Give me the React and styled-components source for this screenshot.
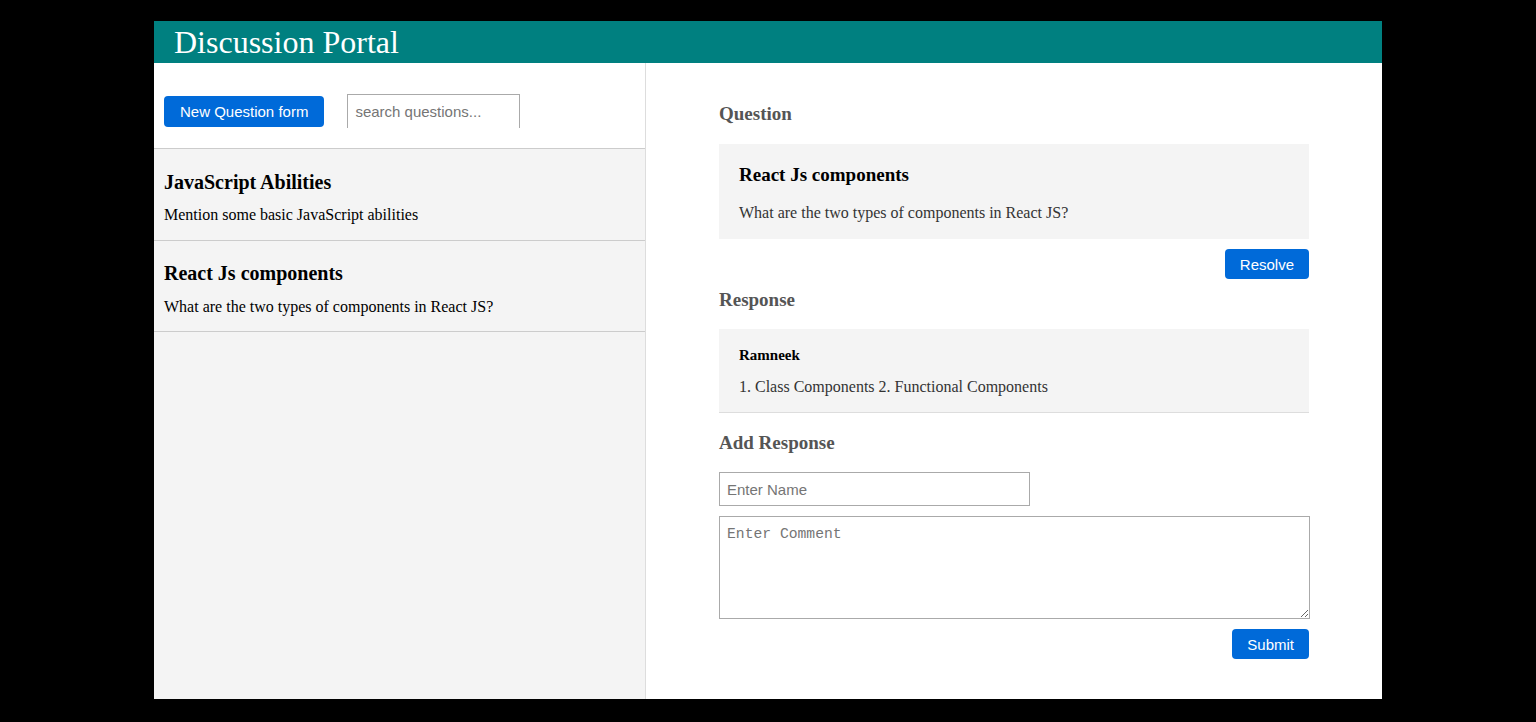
import React from "react";
import styled, { createGlobalStyle } from "styled-components";

const Global = createGlobalStyle`
  html, body { margin: 0; padding: 0; background: #000; }
  body { font-family: "Liberation Serif", "Times New Roman", serif; }
  * { box-sizing: border-box; }
`;

const Page = styled.div`
  width: 1228px;
  height: 678px;
  margin: 21px auto 0;
  background: #fff;
  display: flex;
  flex-direction: column;
`;

const Header = styled.header`
  height: 42px;
  background: #008080;
  color: #fff;
  padding-left: 20px;
  display: flex;
  align-items: center;
  font-size: 32px;
  line-height: 42px;
  font-family: "Liberation Serif", serif;
`;

const Main = styled.div`
  flex: 1;
  display: flex;
  min-height: 0;
`;

const Sidebar = styled.aside`
  width: 492px;
  border-right: 1px solid #ddd;
  display: flex;
  flex-direction: column;
`;

const Toolbar = styled.div`
  height: 85px;
  padding: 31px 10px 0;
  display: flex;
  align-items: flex-start;
  gap: 23px;
`;

const Button = styled.button`
  height: ${(p) => p.$h || 30}px;
  padding: 0 ${(p) => p.$px || 16}px;
  margin-top: ${(p) => p.$mt || 0}px;
  background: #006ad9;
  color: #fff;
  border: none;
  border-radius: 4px;
  font-family: "Liberation Sans", Arial, sans-serif;
  font-size: 15px;
  cursor: pointer;
`;

const Search = styled.input`
  width: 173px;
  height: 34px;
  border: 1px solid #aaa;
  border-bottom: none;
  padding: 0 7px;
  font-family: "Liberation Sans", Arial, sans-serif;
  font-size: 15px;
  outline: none;
  &::placeholder { color: #757575; }
`;

const List = styled.div`
  flex: 1;
  background: #f4f4f4;
  border-top: 1px solid #ccc;
`;

const Item = styled.div`
  padding: 21px 10px 15px;
  border-bottom: 1px solid #ccc;
  &:first-child { padding-top: 22px; padding-bottom: 16px; }
`;

const ItemTitle = styled.h3`
  margin: 0 0 ${(p) => (p.$first ? 12 : 13)}px;
  font-size: 20px;
  line-height: 22px;
  font-weight: bold;
  color: #000;
`;

const ItemText = styled.p`
  margin: 0;
  font-size: 16px;
  line-height: 19px;
  color: #000;
`;

const Detail = styled.section`
  flex: 1;
  display: flex;
  justify-content: center;
`;

const DetailInner = styled.div`
  width: 590px;
  padding-top: 40px;
  display: flex;
  flex-direction: column;
`;

const SectionTitle = styled.h3`
  margin: ${(p) => p.$mt || 0}px 0 ${(p) => p.$mb || 18}px;
  font-size: 19px;
  line-height: 22px;
  font-weight: bold;
  color: #555;
`;

const Card = styled.div`
  background: #f4f4f4;
  padding: ${(p) => p.$pad};
  border-bottom: ${(p) => (p.$border ? "1px solid #ddd" : "none")};
`;

const CardTitle = styled.h4`
  margin: 0 0 ${(p) => p.$mb}px;
  font-size: ${(p) => p.$size}px;
  line-height: ${(p) => p.$lh}px;
  font-weight: bold;
  color: #000;
`;

const CardText = styled.p`
  margin: 0;
  font-size: 16px;
  line-height: 18px;
  color: #333;
`;

const Actions = styled.div`
  display: flex;
  justify-content: flex-end;
  margin-top: ${(p) => p.$mt}px;
`;

const NameInput = styled.input`
  width: 311px;
  height: 34px;
  border: 1px solid #aaa;
  padding: 0 7px;
  font-family: "Liberation Sans", Arial, sans-serif;
  font-size: 15px;
  outline: none;
  &::placeholder { color: #757575; }
`;

const Comment = styled.textarea`
  width: 591px;
  height: 103px;
  margin-top: 10px;
  border: 1px solid #aaa;
  padding: 9px 7px;
  font-family: "Liberation Mono", "Courier New", monospace;
  font-size: 14.7px;
  outline: none;
  resize: vertical;
  &::placeholder { color: #757575; }
`;

const questions = [
  { title: "JavaScript Abilities", text: "Mention some basic JavaScript abilities" },
  { title: "React Js components", text: "What are the two types of components in React JS?" },
];

export default function App() {
  return (
    <>
      <Global />
      <Page>
        <Header>Discussion Portal</Header>
        <Main>
          <Sidebar>
            <Toolbar>
              <Button $h={31} $px={16} $mt={2}>New Question form</Button>
              <Search placeholder="search questions..." />
            </Toolbar>
            <List>
              {questions.map((q, i) => (
                <Item key={q.title}>
                  <ItemTitle $first={i === 0}>{q.title}</ItemTitle>
                  <ItemText>{q.text}</ItemText>
                </Item>
              ))}
            </List>
          </Sidebar>
          <Detail>
            <DetailInner>
              <SectionTitle $mb={19}>Question</SectionTitle>
              <Card $pad="20px 20px 17px">
                <CardTitle $size={19} $lh={22} $mb={18}>React Js components</CardTitle>
                <CardText>What are the two types of components in React JS?</CardText>
              </Card>
              <Actions $mt={10}>
                <Button $h={30} $px={15}>Resolve</Button>
              </Actions>
              <SectionTitle $mt={10} $mb={18}>Response</SectionTitle>
              <Card $pad="18px 20px 16px" $border>
                <CardTitle $size={15} $lh={17} $mb={14}>Ramneek</CardTitle>
                <CardText>1. Class Components 2. Functional Components</CardText>
              </Card>
              <SectionTitle $mt={19} $mb={18}>Add Response</SectionTitle>
              <NameInput placeholder="Enter Name" />
              <Comment placeholder="Enter Comment" />
              <Actions $mt={10}>
                <Button $h={30} $px={15}>Submit</Button>
              </Actions>
            </DetailInner>
          </Detail>
        </Main>
      </Page>
    </>
  );
}
